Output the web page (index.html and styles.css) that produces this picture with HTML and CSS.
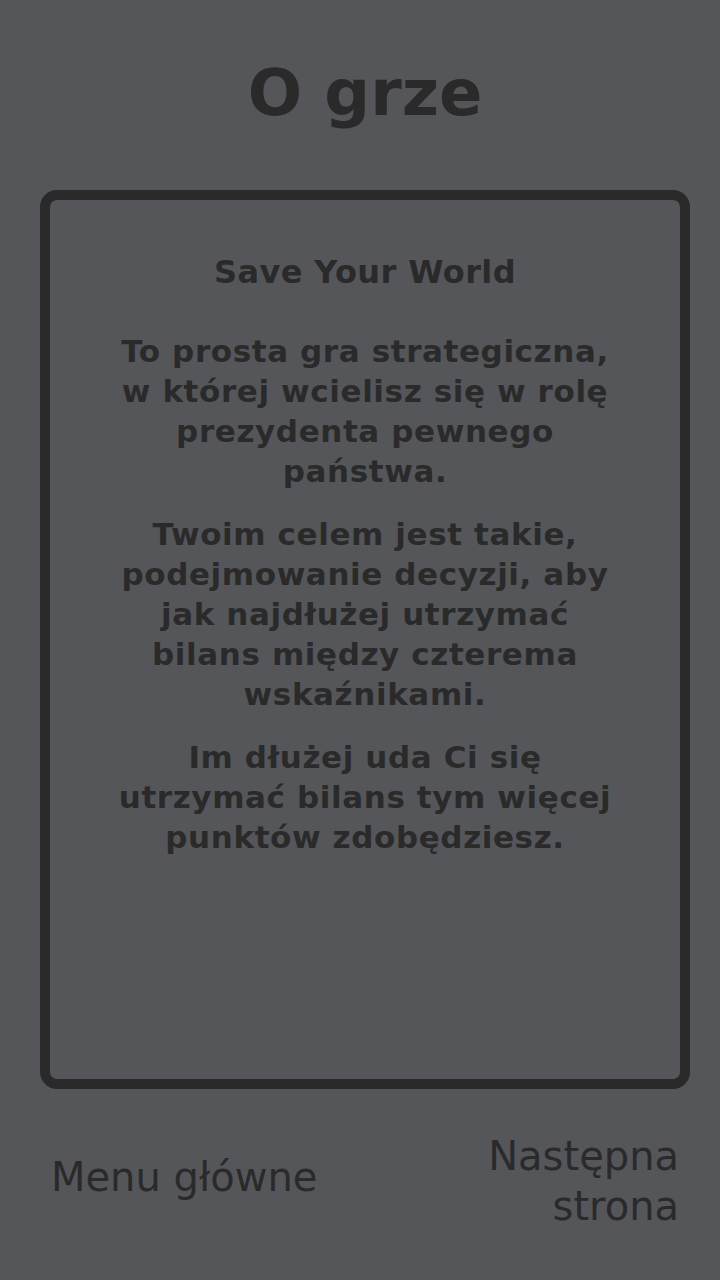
FILE: index.html
```html
<!DOCTYPE html>
<html lang="pl">
<head>
<meta charset="utf-8">
<title>O grze</title>
<link rel="stylesheet" href="styles.css">
</head>
<body>
<div class="screen">
  <h1 class="title">O grze</h1>
  <div class="card">
    <h2 class="card-title">Save Your World</h2>
    <p class="para">To prosta gra strategiczna, w której wcielisz się w rolę prezydenta pewnego państwa.</p>
    <p class="para">Twoim celem jest takie, podejmowanie decyzji, aby jak najdłużej utrzymać bilans między czterema wskaźnikami.</p>
    <p class="para">Im dłużej uda Ci się utrzymać bilans tym więcej punktów zdobędziesz.</p>
  </div>
  <div class="nav">
    <div class="nav-btn nav-left">Menu główne</div>
    <div class="nav-btn nav-right">Następna<br>strona</div>
  </div>
</div>
</body>
</html>
```

FILE: styles.css
```css
html, body {
  margin: 0;
  padding: 0;
  background: #55565a;
}
body {
  font-family: "DejaVu Sans", "Liberation Sans", sans-serif;
  color: #2a2a2b;
}
.screen {
  width: 720px;
  height: 1280px;
  box-sizing: border-box;
  padding: 61px 30px 0 40px;
  display: flex;
  flex-direction: column;
}
.title {
  margin: 0;
  font-size: 64px;
  line-height: 64px;
  font-weight: bold;
  text-align: center;
}
.card {
  margin-top: 65px;
  height: 899px;
  box-sizing: border-box;
  border: 10px solid #2a2a2b;
  border-radius: 17px;
  padding: 52px 0 0;
  display: flex;
  flex-direction: column;
  align-items: center;
  text-align: center;
}
.card-title {
  margin: 0 0 39px;
  font-size: 32px;
  line-height: 40px;
  font-weight: bold;
  letter-spacing: 0.4px;
}
.para {
  width: 502px;
  margin: 0 0 23px;
  font-size: 31px;
  line-height: 40px;
  font-weight: bold;
  letter-spacing: 0.6px;
}
.nav {
  margin-top: 42px;
  padding: 0 11px;
  display: flex;
  justify-content: space-between;
  align-items: center;
}
.nav-btn {
  font-size: 40px;
  line-height: 50px;
}
.nav-left {
  margin-bottom: 8px;
}
.nav-right {
  text-align: right;
}
```
